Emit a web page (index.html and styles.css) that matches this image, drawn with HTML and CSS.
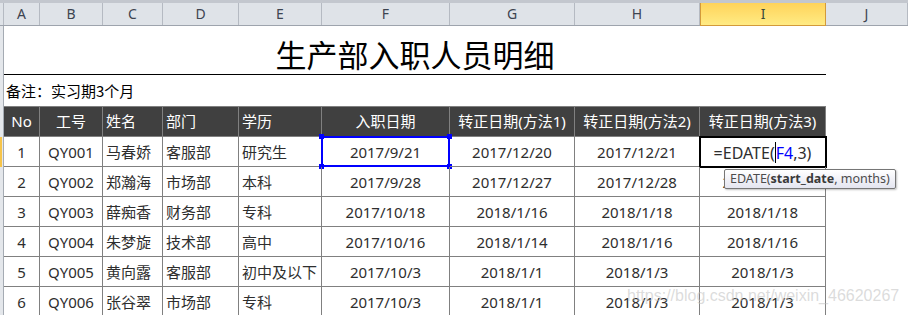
FILE: index.html
```html
<!DOCTYPE html>
<html lang="zh">
<head>
<meta charset="utf-8">
<title>生产部入职人员明细</title>
<link rel="stylesheet" href="styles.css">
</head>
<body>
<div class="sheet">
  <div class="grid colhdr">
    <div class="corner"></div>
    <div class="ch">A</div><div class="ch">B</div><div class="ch">C</div><div class="ch">D</div><div class="ch">E</div>
    <div class="ch">F</div><div class="ch">G</div><div class="ch">H</div><div class="ch sel">I</div><div class="ch">J</div>
  </div>

  <div class="grid title-row">
    <div class="rh"></div>
    <div class="title">生产部入职人员明细</div>
    <div class="blank"></div>
  </div>

  <div class="grid note-row">
    <div class="rh"></div>
    <div class="note">备注：实习期3个月</div>
  </div>

  <div class="grid trow thead">
    <div class="rh"></div>
    <div class="c ctr">No</div>
    <div class="c ctr">工号</div>
    <div class="c">姓名</div>
    <div class="c">部门</div>
    <div class="c">学历</div>
    <div class="c ctr">入职日期</div>
    <div class="c ctr">转正日期(方法1)</div>
    <div class="c ctr">转正日期(方法2)</div>
    <div class="c ctr">转正日期(方法3)</div>
    <div class="blank"></div>
  </div>

  <div class="grid trow">
    <div class="rh active-row"></div>
    <div class="c ctr">1</div>
    <div class="c ctr">QY001</div>
    <div class="c">马春娇</div>
    <div class="c">客服部</div>
    <div class="c">研究生</div>
    <div class="c ctr ref">2017/9/21<span class="refbox"><i class="h tl"></i><i class="h tr"></i><i class="h bl"></i><i class="h br"></i></span></div>
    <div class="c ctr">2017/12/20</div>
    <div class="c ctr">2017/12/21</div>
    <div class="c ctr edit"><span class="formula">=EDATE(<span class="cursor"></span><span class="blue">F4</span>,3)</span><span class="activebox"></span>
      <div class="tip">EDATE(<b>start_date</b>, months)</div>
    </div>
    <div class="blank"></div>
  </div>

  <div class="grid trow">
    <div class="rh"></div>
    <div class="c ctr">2</div>
    <div class="c ctr">QY002</div>
    <div class="c">郑瀚海</div>
    <div class="c">市场部</div>
    <div class="c">本科</div>
    <div class="c ctr">2017/9/28</div>
    <div class="c ctr">2017/12/27</div>
    <div class="c ctr">2017/12/28</div>
    <div class="c ctr">2017/12/28</div>
    <div class="blank"></div>
  </div>

  <div class="grid trow">
    <div class="rh"></div>
    <div class="c ctr">3</div>
    <div class="c ctr">QY003</div>
    <div class="c">薛痴香</div>
    <div class="c">财务部</div>
    <div class="c">专科</div>
    <div class="c ctr">2017/10/18</div>
    <div class="c ctr">2018/1/16</div>
    <div class="c ctr">2018/1/18</div>
    <div class="c ctr">2018/1/18</div>
    <div class="blank"></div>
  </div>

  <div class="grid trow">
    <div class="rh"></div>
    <div class="c ctr">4</div>
    <div class="c ctr">QY004</div>
    <div class="c">朱梦旋</div>
    <div class="c">技术部</div>
    <div class="c">高中</div>
    <div class="c ctr">2017/10/16</div>
    <div class="c ctr">2018/1/14</div>
    <div class="c ctr">2018/1/16</div>
    <div class="c ctr">2018/1/16</div>
    <div class="blank"></div>
  </div>

  <div class="grid trow">
    <div class="rh"></div>
    <div class="c ctr">5</div>
    <div class="c ctr">QY005</div>
    <div class="c">黄向露</div>
    <div class="c">客服部</div>
    <div class="c">初中及以下</div>
    <div class="c ctr">2017/10/3</div>
    <div class="c ctr">2018/1/1</div>
    <div class="c ctr">2018/1/3</div>
    <div class="c ctr">2018/1/3</div>
    <div class="blank"></div>
  </div>

  <div class="grid trow">
    <div class="rh"></div>
    <div class="c ctr">6</div>
    <div class="c ctr">QY006</div>
    <div class="c">张谷翠</div>
    <div class="c">市场部</div>
    <div class="c">专科</div>
    <div class="c ctr">2017/10/3</div>
    <div class="c ctr">2018/1/1</div>
    <div class="c ctr">2018/1/3</div>
    <div class="c ctr">2018/1/3</div>
    <div class="blank"></div>
  </div>

  <div class="watermark">https://blog.csdn.net/weixin_46620267</div>
</div>
</body>
</html>
```

FILE: styles.css
```css
html, body {
  margin: 0;
  padding: 0;
  background: #ffffff;
}

.sheet {
  position: relative;
  width: 908px;
  height: 315px;
  overflow: hidden;
  font-family: "Noto Sans", "Noto Sans CJK SC", sans-serif;
  font-size: 15px;
  color: #2e2e2e;
}

.grid {
  display: grid;
  grid-template-columns: 4px 36px 63px 60px 76px 83px 128px 125px 125px 126px 82px;
}

/* column header */
.colhdr {
  height: 26px;
  box-sizing: border-box;
  border-top: 3px solid #c3c7ce;
  border-bottom: 1px solid #9ea4ad;
  background: #dfe3e8;
}
.corner {
  border-right: 1px solid #b5bac2;
}
.ch {
  border-right: 1px solid #b5bac2;
  display: flex;
  align-items: center;
  justify-content: center;
  font-size: 14px;
  color: #3d4450;
  line-height: 1;
}
.ch.sel {
  background: linear-gradient(#ffd35a, #ffeb84);
  border: 1px solid #d39a3a;
  border-top: 0;
  margin-bottom: -1px;
  color: #3a4a3a;
}

/* row header sliver */
.rh {
  background: #e4e7eb;
  border-right: 1px solid #a5abb3;
}
.rh.active-row {
  background: linear-gradient(90deg, #f6c44a 0, #f6c44a 2px, #e4e7eb 2px);
}

/* title */
.title-row {
  height: 49px;
}
.title {
  grid-column: 2 / 11;
  border-bottom: 1px solid #000;
  display: flex;
  align-items: flex-end;
  justify-content: center;
  font-family: "Noto Sans CJK SC", sans-serif;
  font-size: 31px;
  line-height: 1;
  color: #000;
  padding-bottom: 5px;
}

.note-row {
  height: 31px;
}
.note {
  grid-column: 2 / 11;
  display: flex;
  align-items: center;
  padding-left: 2px;
  padding-bottom: 1px;
  font-family: "Noto Sans CJK SC", sans-serif;
  font-size: 15px;
  color: #000;
}

/* table */
.trow {
  height: 30px;
}
.c {
  border-right: 1px solid #808080;
  border-bottom: 1px solid #808080;
  display: flex;
  align-items: center;
  padding-left: 3px;
  padding-top: 2px;
  white-space: nowrap;
  line-height: 1;
  position: relative;
}
.c.ctr {
  justify-content: center;
  padding-left: 0;
}
.thead {
  height: 31px;
}
.thead .c {
  background: #404040;
  color: #ffffff;
  border-top: 1px solid #808080;
  padding-top: 0;
}

/* referenced cell F4 */
.refbox {
  position: absolute;
  left: -1px;
  top: -1px;
  right: -1px;
  bottom: -1px;
  border: 2px solid #0000ff;
}
.h {
  position: absolute;
  width: 5px;
  height: 5px;
  background: #0000ff;
}
.h.tl { left: -4px; top: -4px; }
.h.tr { right: -4px; top: -4px; }
.h.bl { left: -4px; bottom: -4px; }
.h.br { right: -4px; bottom: -4px; }

/* active edit cell */
.formula {
  display: inline-flex;
  align-items: center;
  font-size: 16px;
}
.blue {
  color: #0000ff;
}
.cursor {
  display: inline-block;
  width: 1px;
  height: 21px;
  background: #000;
}
.activebox {
  position: absolute;
  left: -1px;
  top: -1px;
  right: -2px;
  bottom: -2px;
  border: 2px solid #000;
}
.tip {
  position: absolute;
  left: 24px;
  top: 32px;
  z-index: 3;
  height: 20px;
  box-sizing: border-box;
  padding: 0 5px;
  display: flex;
  align-items: center;
  border: 1px solid #767676;
  border-radius: 2px;
  background: linear-gradient(#ffffff, #e4e5f0);
  box-shadow: 1px 1px 2px rgba(0, 0, 0, 0.25);
  font-family: "Noto Sans", sans-serif;
  font-size: 12.5px;
  color: #4c4c4c;
  white-space: nowrap;
}
.tip b {
  font-weight: 700;
  color: #3a3a3a;
}

.watermark {
  position: absolute;
  left: 627px;
  top: 287px;
  font-family: "Liberation Sans", Arial, sans-serif;
  font-size: 16px;
  line-height: 18px;
  color: rgba(190, 190, 190, 0.55);
  white-space: nowrap;
  z-index: 4;
}
```
